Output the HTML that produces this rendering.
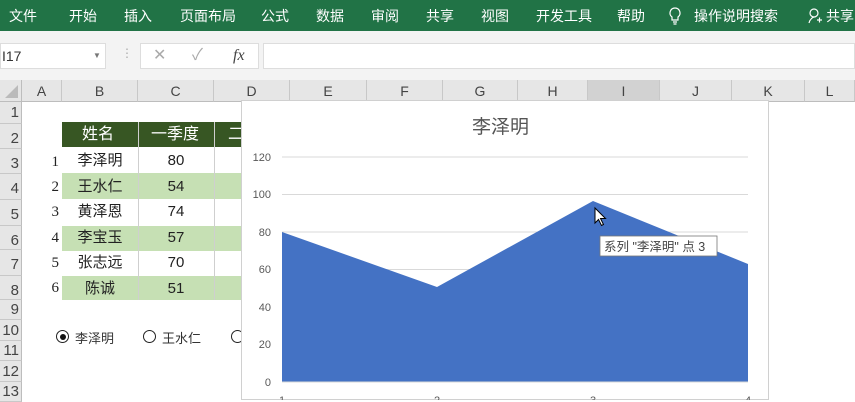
<!DOCTYPE html>
<html><head><meta charset="utf-8"><style>
*{margin:0;padding:0;box-sizing:border-box}
body{width:855px;height:400px;overflow:hidden;background:#fff;position:relative;font-family:"Liberation Sans","Noto Sans CJK SC",sans-serif}
.a{position:absolute}
.rib{left:0;top:0;width:855px;height:31px;background:#217346;color:#fff;font-size:14px}
.rib span{position:absolute;top:6px}
.col{top:80px;height:22px;background:#e6e6e6;border-right:1px solid #c8c8c8;border-bottom:1px solid #bdbdbd;text-align:center;font-size:14px;line-height:22px;color:#444}
.row{left:0;width:22px;background:#e6e6e6;border-bottom:1px solid #c8c8c8;border-right:1px solid #bdbdbd;font-size:15px;color:#444;text-align:right;padding-right:2px}
</style></head><body>
<div class="a rib">
<span style="left:9px">文件</span><span style="left:69px">开始</span><span style="left:124px">插入</span><span style="left:180px">页面布局</span><span style="left:261px">公式</span><span style="left:316px">数据</span><span style="left:371px">审阅</span><span style="left:426px">共享</span><span style="left:481px">视图</span><span style="left:536px">开发工具</span><span style="left:617px">帮助</span>
<svg class="a" style="left:668px;top:7px" width="14" height="18"><path d="M7 1a5 5 0 0 0-3 9v3h6v-3a5 5 0 0 0-3-9zM5 15h4M5.5 17h3" stroke="#fff" fill="none" stroke-width="1.2"/></svg>
<span style="left:694px">操作说明搜索</span>
<svg class="a" style="left:808px;top:7px" width="14" height="18"><circle cx="6" cy="6" r="4" stroke="#fff" fill="none" stroke-width="1.2"/><path d="M1 16c1-4 4-6 5-6M9 13h5M11.5 10.5v5" stroke="#fff" fill="none" stroke-width="1.2"/></svg>
<span style="left:826px">共享</span>
</div>
<div class="a" style="left:0;top:31px;width:855px;height:49px;background:#f3f3f3"></div>
<div class="a" style="left:0;top:43px;width:106px;height:26px;background:#fff;border:1px solid #ddd;font-size:14px;line-height:24px;color:#333;padding-left:1px">I17<span style="position:absolute;left:92px;font-size:8px;color:#777">▼</span></div>
<div class="a" style="left:121px;top:46px;color:#aaa;font-size:12px">⋮</div>
<div class="a" style="left:140px;top:43px;width:119px;height:26px;background:#fff;border:1px solid #ddd;color:#aaa;font-size:16px;line-height:24px"><span style="position:absolute;left:12px">✕</span><span style="position:absolute;left:51px">✓</span><span style="position:absolute;left:92px;font-family:'Liberation Serif';font-style:italic;color:#444">fx</span></div>
<div class="a" style="left:263px;top:43px;width:592px;height:26px;background:#fff;border:1px solid #ddd"></div>
<div class="a" style="left:0;top:80px;width:22px;height:22px;background:#e6e6e6;border-right:1px solid #bdbdbd;border-bottom:1px solid #bdbdbd"><div style="position:absolute;right:3px;bottom:3px;border-left:13px solid transparent;border-bottom:13px solid #bbb;width:0;height:0"></div></div>
<div class="a col" style="left:22px;width:40px">A</div>
<div class="a col" style="left:62px;width:76px">B</div>
<div class="a col" style="left:138px;width:76px">C</div>
<div class="a col" style="left:214px;width:76px">D</div>
<div class="a col" style="left:290px;width:77px">E</div>
<div class="a col" style="left:367px;width:76px">F</div>
<div class="a col" style="left:443px;width:75px">G</div>
<div class="a col" style="left:518px;width:70px">H</div>
<div class="a col" style="left:588px;width:72px;background:#d2d2d2;border-bottom:2px solid #217346">I</div>
<div class="a col" style="left:660px;width:72px">J</div>
<div class="a col" style="left:732px;width:73px">K</div>
<div class="a col" style="left:805px;width:50px">L</div>
<div class="a row" style="top:102px;height:22px;line-height:22px">1</div>
<div class="a row" style="top:124px;height:25px;line-height:30px">2</div>
<div class="a row" style="top:149px;height:25px;line-height:30px">3</div>
<div class="a row" style="top:174px;height:26px;line-height:30px">4</div>
<div class="a row" style="top:200px;height:26px;line-height:30px">5</div>
<div class="a row" style="top:226px;height:24px;line-height:30px">6</div>
<div class="a row" style="top:250px;height:26px;line-height:30px">7</div>
<div class="a row" style="top:276px;height:24px;line-height:30px">8</div>
<div class="a row" style="top:300px;height:20px;line-height:20px">9</div>
<div class="a row" style="top:320px;height:21px;line-height:21px">10</div>
<div class="a row" style="top:341px;height:20px;line-height:20px">11</div>
<div class="a row" style="top:361px;height:21px;line-height:21px">12</div>
<div class="a row" style="top:382px;height:20px;line-height:20px">13</div>
<div class="a" style="left:62px;top:122px;width:180px;height:25px;background:#375623;color:#fff;font-size:16px;line-height:25px"><span class="a" style="left:20px">姓名</span><span class="a" style="left:89px">一季度</span><span class="a" style="left:166px">二</span></div>
<div class="a" style="left:62px;top:173px;width:180px;height:26px;background:#c6e0b4"></div>
<div class="a" style="left:62px;top:226px;width:180px;height:25px;background:#c6e0b4"></div>
<div class="a" style="left:62px;top:276px;width:180px;height:24px;background:#c6e0b4"></div>
<div class="a" style="left:138px;top:122px;width:1px;height:178px;background:#cfcfcf"></div>
<div class="a" style="left:214px;top:122px;width:1px;height:178px;background:#cfcfcf"></div>
<div class="a" style="left:45px;top:150px;font-size:15px;line-height:25.2px;color:#222;font-family:'Liberation Serif',serif;text-align:right;width:14px">1<br>2<br>3<br>4<br>5<br>6</div>
<div class="a" style="left:62px;top:148px;width:76px;font-size:15px;line-height:25.5px;text-align:center;color:#222">李泽明<br>王水仁<br>黄泽恩<br>李宝玉<br>张志远<br>陈诚</div>
<div class="a" style="left:138px;top:148px;width:76px;font-size:15px;line-height:25.5px;text-align:center;color:#222">80<br>54<br>74<br>57<br>70<br>51</div>
<div class="a" style="left:56px;top:330px;width:13px;height:13px;border:1px solid #222;border-radius:50%"><div style="margin:2.5px;width:6px;height:6px;background:#111;border-radius:50%"></div></div>
<div class="a" style="left:75px;top:328px;font-size:13px;color:#333">李泽明</div>
<div class="a" style="left:143px;top:330px;width:13px;height:13px;border:1px solid #222;border-radius:50%"></div>
<div class="a" style="left:162px;top:328px;font-size:13px;color:#333">王水仁</div>
<div class="a" style="left:231px;top:330px;width:13px;height:13px;border:1px solid #222;border-radius:50%"></div>
<div class="a" style="left:241px;top:100px;width:528px;height:300px;background:#fff;border:1px solid #d0d0d0"></div>
<div class="a" style="left:472px;top:112px;font-size:19px;color:#555">李泽明</div>
<svg class="a" style="left:241px;top:100px" width="528" height="300">
<g stroke="#d9d9d9" stroke-width="1"><line x1="41" x2="507" y1="57" y2="57"/><line x1="41" x2="507" y1="94.5" y2="94.5"/><line x1="41" x2="507" y1="132" y2="132"/><line x1="41" x2="507" y1="169.5" y2="169.5"/></g>
<polygon points="41,132 196,187 352,101 507,164 507,282 41,282" fill="#4472c4"/>
<line x1="41" x2="507" y1="282" y2="282" stroke="#d9d9d9"/>
<g font-size="11" fill="#595959" text-anchor="end" font-family="Liberation Sans"><text x="30" y="61">120</text><text x="30" y="98">100</text><text x="30" y="136">80</text><text x="30" y="173">60</text><text x="30" y="211">40</text><text x="30" y="248">20</text><text x="30" y="286">0</text></g>
<g font-size="11" fill="#595959" text-anchor="middle"><text x="41" y="304">1</text><text x="196" y="304">2</text><text x="352" y="304">3</text><text x="507" y="304">4</text></g>
<path d="M354 108v15l3.5-3.5 3 6 2-1-3-6h5z" fill="#fff" stroke="#000" stroke-width="1"/>
<rect x="359" y="136" width="117" height="20" fill="#fff" stroke="#777" stroke-width="0.8"/>
<text x="363" y="151" font-size="12.5" fill="#444">系列 "李泽明" 点 3</text>
</svg>
</body></html>
